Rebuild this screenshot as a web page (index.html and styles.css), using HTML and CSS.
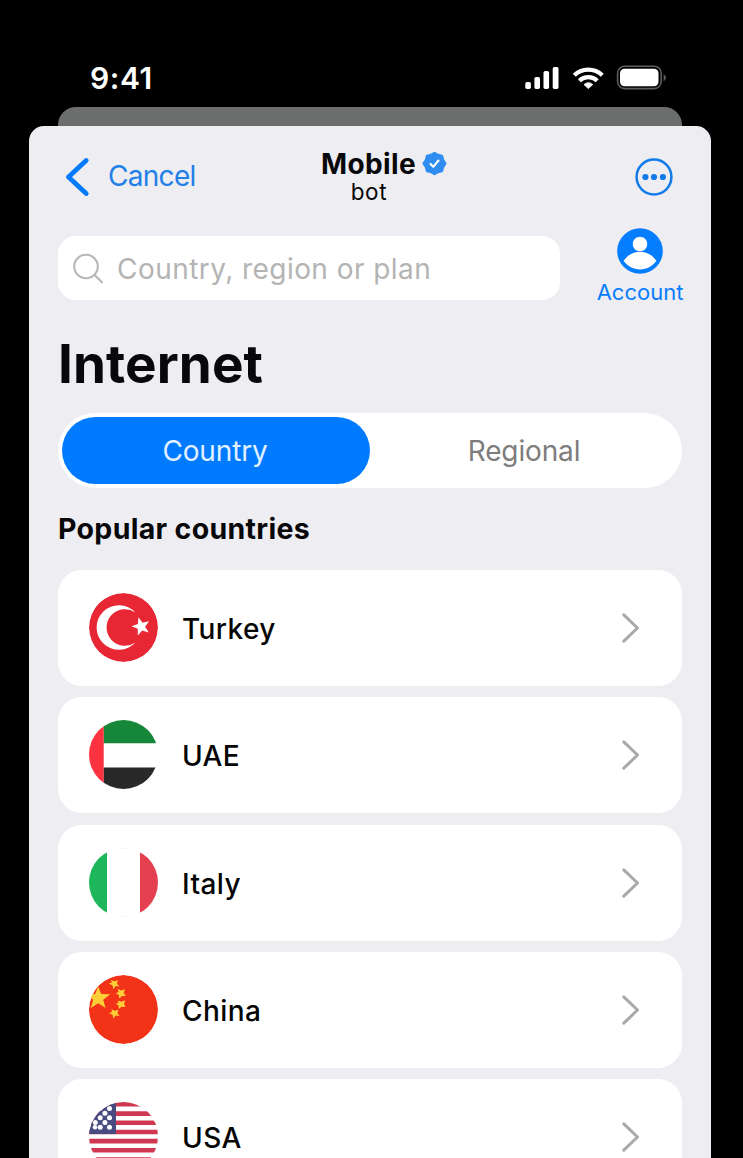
FILE: index.html
```html
<!DOCTYPE html>
<html lang="en">
<head>
<meta charset="utf-8">
<title>Mobile bot</title>
<link rel="stylesheet" href="styles.css">
</head>
<body>
<div class="phone">
  <header class="status">
    <span class="clock">9:41</span>
    <svg class="signals" width="142" height="26" viewBox="524 65 142 26">
      <g fill="#fff">
        <rect x="525.3" y="82" width="5.6" height="7" rx="1.7"/>
        <rect x="534.4" y="77" width="5.6" height="12" rx="1.7"/>
        <rect x="543.5" y="71" width="5.6" height="18" rx="1.7"/>
        <rect x="552.7" y="67" width="5.8" height="22" rx="1.7"/>
        <path d="M588.3 88.600 L584 84.600 Q588.300 80.700 592.800 84.600Z" stroke="#fff" stroke-width=".8" stroke-linejoin="round"/>
      </g>
      <g fill="none" stroke="#fff" stroke-width="4.300">
        <path d="M574.300 75.300 A20.300 20.300 0 0 1 602.300 75.300"/>
        <path d="M579.400 80.700 A13 13 0 0 1 597.200 80.700"/>
      </g>
      <rect x="617.600" y="66.200" width="43.600" height="22.400" rx="7" fill="none" stroke="#5c5c5c" stroke-width="1.600"/>
      <rect x="620" y="68.800" width="38.500" height="17.400" rx="4.500" fill="#fff"/>
      <path d="M663.600 74.300 V81.300 Q666 80 666 77.800 Q666 75.500 663.600 74.300Z" fill="#5c5c5c"/>
    </svg>
  </header>
  <div class="back-sheet"></div>
  <main class="sheet">
    <nav class="nav">
      <a class="cancel">
        <svg width="26" height="40" viewBox="0 0 26 40"><path d="M21.200 3.500 L3.500 20 L21.200 36.500" fill="none" stroke="#047bfb" stroke-width="4.800" stroke-linecap="round" stroke-linejoin="round"/></svg>
        <span>Cancel</span>
      </a>
      <div class="bot">
        <div class="bot-name"><span>Mobile</span>
          <svg width="25" height="25" viewBox="-12.500 -12.500 25 25">
            <path fill="#2f8df0" stroke="#2f8df0" stroke-width="2.400" stroke-linejoin="round" d="M0-10.600 L3.300-8.500 L7.500-7.500 L8.500-3.500 L10.800 0 L8.500 3.500 L7.500 7.500 L3.300 8.500 L0 10.600 L-3.300 8.500 L-7.500 7.500 L-8.500 3.500 L-10.800 0 L-8.500-3.500 L-7.500-7.500 L-3.300-8.500Z"/>
            <path d="M-4 .4 L-1.200 3.300 L4-3" fill="none" stroke="#fff" stroke-width="2.100" stroke-linecap="round" stroke-linejoin="round"/>
          </svg>
        </div>
        <div class="bot-kind">bot</div>
      </div>
      <svg class="more" width="38" height="38" viewBox="-19 -19 38 38">
        <circle r="17.400" fill="none" stroke="#117bea" stroke-width="2.500"/>
        <g fill="#117bea"><circle cx="-8.600" r="3.100"/><circle r="3.100"/><circle cx="8.900" r="3.100"/></g>
      </svg>
    </nav>
    <section class="find">
      <div class="search">
        <svg width="31" height="31" viewBox="0 0 31 31"><g fill="none" stroke="#b7b7b7" stroke-width="2.100" stroke-linecap="round"><circle cx="13" cy="13.500" r="11.800"/><path d="M21.500 22 L29 29.300"/></g></svg>
        <span>Country, region or plan</span>
      </div>
      <a class="account">
        <svg width="46" height="46" viewBox="-23 -23 46 46"><circle r="22.800" fill="#057dff"/><circle cy="-7" r="7.300" fill="#fff"/><path d="M-16.400 9.800 C-8-2.300 8-2.300 16.400 9.800 C8.500 21.300-8.500 21.300-16.400 9.800Z" fill="#fff"/></svg>
        <span>Account</span>
      </a>
    </section>
    <h1>Internet</h1>
    <div class="tabs">
      <div class="tab active">Country</div>
      <div class="tab">Regional</div>
    </div>
    <h2>Popular countries</h2>
    <ul class="list">
      <li>
        <svg class="flag" viewBox="-34.500 -34.500 69 69"><circle r="34.500" fill="#e82735"/><path d="M11.900-15 A22.300 22.300 0 1 0 11.900 15 A18.300 18.300 0 1 1 11.900-15Z" fill="#fff"/><path d="M0-10 L2.500-3.400 L9.500-3.100 L4 1.300 L5.900 8.100 L0 4.200 L-5.900 8.100 L-4 1.300 L-9.500-3.100 L-2.500-3.400Z" fill="#fff" transform="translate(17.600 -1) rotate(-16) scale(.96)"/></svg>
        <span>Turkey</span><svg class="chev" viewBox="0 0 18 30"><path d="M1.800 1.800 L15.500 15 L1.800 28.200"/></svg>
      </li>
      <li>
        <svg class="flag" viewBox="-34.500 -34.500 69 69"><path fill="#168638" d="M-20-34.500H34.500V-11H-20Z"/><path fill="#fff" d="M-20-11H34.500V13H-20Z"/><path fill="#292929" d="M-20 13H34.500V34.500H-20Z"/><path fill="#fb3340" d="M-34.500-34.500H-19.800V34.500H-34.500Z"/></svg>
        <span>UAE</span><svg class="chev" viewBox="0 0 18 30"><path d="M1.800 1.800 L15.500 15 L1.800 28.200"/></svg>
      </li>
      <li>
        <svg class="flag" viewBox="-34.500 -34.500 69 69"><path fill="#fff" d="M-34.500-34.500H34.500V34.500H-34.500Z"/><path fill="#1eb65b" d="M-34.500-34.500H-16.500V34.500H-34.500Z"/><path fill="#e4404f" d="M16.500-34.500H34.500V34.500H16.500Z"/><path d="M-7-33.900Q0-34.600 7-33.900M-7 33.900Q0 34.600 7 33.900" fill="none" stroke="#f3f3f3"/></svg>
        <span>Italy</span><svg class="chev" viewBox="0 0 18 30"><path d="M1.800 1.800 L15.500 15 L1.800 28.200"/></svg>
      </li>
      <li>
        <svg class="flag" viewBox="-34.500 -34.500 69 69"><circle r="34.500" fill="#f23317"/>
          <g fill="#fccf38"><path d="M0-11.500 L3-3.900 L12-3.600 L5 1.800 L7.400 10 L0 5.300 L-7.400 10 L-5 1.800 L-12-3.600 L-3-3.900Z" transform="translate(-25.300 -11.600)"/>
          <path d="M-12.500-29.500 L-9.200-28.200 L-5.300-29.200 L-6.600-26 L-4-23 L-7.800-23.400 L-10.200-20.300 L-11-24 L-14.600-26 L-11.700-26.800Z"/>
          <path d="M-5.800-20.800 L-2.500-19 L1.400-20.300 L.2-16.500 L2.400-13.500 L-1.500-13.500 L-4.300-11 L-4.700-14.500 L-7.800-16.300 L-5-17.600Z"/>
          <path d="M-5.800-9 L-2-7.700 L1.600-9.300 L.6-5.500 L2-2.400 L-2-2.800 L-4.800-.4 L-5-4 L-7.800-6 L-5-6.600Z"/>
          <path d="M-12-.3 L-8.800 1.300 L-5 .3 L-6.200 3.500 L-4 6.500 L-7.800 6 L-10.200 9 L-11 5.300 L-14.600 3.500 L-11.500 2.600Z"/></g></svg>
        <span>China</span><svg class="chev" viewBox="0 0 18 30"><path d="M1.800 1.800 L15.500 15 L1.800 28.200"/></svg>
      </li>
      <li>
        <svg class="flag" viewBox="-34.500 -34.500 69 69"><path fill="#fff" d="M-35-35H35V35H-35Z"/><path stroke="#cf3850" stroke-width="4.600" d="M-35-32.300H35M-35-22.900H35M-35-13.700H35M-35-4.500H35M-35 4.600H35M-35 13.800H35M-35 23H35M-35 32.300H35"/><path fill="#484b80" d="M-35-35H-7.500V-2.600H-35Z"/>
          <g fill="#fff"><circle cx="-14" cy="-28" r="2.500"/><circle cx="-23" cy="-27.800" r="2"/><circle cx="-18.600" cy="-23.300" r="2.500"/><circle cx="-14" cy="-18.700" r="2.500"/><circle cx="-23.300" cy="-18.700" r="2.500"/><circle cx="-18.600" cy="-14" r="2.500"/><circle cx="-28.200" cy="-14" r="2.500"/><circle cx="-14" cy="-9.300" r="2.500"/><circle cx="-23.300" cy="-9.300" r="2.500"/><circle cx="-28.500" cy="-9.300" r="2.300"/></g></svg>
        <span>USA</span><svg class="chev" viewBox="0 0 18 30"><path d="M1.800 1.800 L15.500 15 L1.800 28.200"/></svg>
      </li>
    </ul>
  </main>
</div>
</body>
</html>
```

FILE: styles.css
```css
* { box-sizing: border-box; }
body { margin: 0; background: #000; font-family: Inter, sans-serif; color: #08080a; }
.phone { height: 1158px; overflow: hidden; display: flex; flex-direction: column; }
.status { height: 107px; flex: none; padding: 65px 77px 0 90px; display: flex; justify-content: space-between; }
.clock { color: #fff; font-size: 30px; font-weight: 560; line-height: 27px; letter-spacing: .6px; }
.back-sheet { height: 19px; flex: none; margin: 0 61px 0 58px; background: #6c6e6d; border-radius: 18px 18px 0 0; }
.sheet { width: 682px; height: 1400px; flex: none; margin-left: 29px; padding: 0 29px; background: #eeedf2; border-radius: 15px 15px 0 0; }
.nav { height: 102px; padding: 0 9px 0 7px; display: grid; grid-template-columns: 200px 1fr 200px; align-items: center; }
.cancel { display: flex; align-items: center; gap: 17px; color: #217fe8; font-size: 28px; line-height: 34px; letter-spacing: -.7px; }
.cancel span { padding-bottom: 2px; }
.bot { text-align: center; }
.bot-name { display: flex; align-items: center; justify-content: center; gap: 6px; font-size: 28px; font-weight: 700; line-height: 28px; letter-spacing: .4px; margin-left: 30px; }
.bot-kind { font-size: 22.500px; line-height: 27px; letter-spacing: .7px; }
.more { justify-self: end; }
.find { height: 80px; display: flex; align-items: flex-start; }
.search { width: 502px; flex: none; height: 64px; margin-top: 8px; padding-left: 15px; background: #fff; border-radius: 18px; display: flex; align-items: center; gap: 13px; color: #b4b4b4; font-size: 28px; letter-spacing: .45px; }
.search span { padding-top: 2px; }
.account { width: 100px; flex: none; margin-left: 30px; display: flex; flex-direction: column; align-items: center; color: #087dfd; font-size: 22px; line-height: 37px; }
h1 { margin: 24px 0 0; font-size: 53px; line-height: 64px; font-weight: 700; letter-spacing: .1px; }
.tabs { height: 75px; margin-top: 17px; padding: 4px; border-radius: 38px; background: #fff; display: grid; grid-template-columns: 1fr 1fr; }
.tab { border-radius: 34px; display: flex; align-items: center; justify-content: center; font-size: 28px; color: #7d7d7d; letter-spacing: -.15px; }
.active { background: #007aff; color: #e1f1ff; padding-right: 2px; }
h2 { margin: 23px 0 0; font-size: 28.500px; line-height: 36px; font-weight: 700; letter-spacing: .32px; }
.list { list-style: none; margin: 23px 0 0; padding: 0; display: grid; gap: 11.300px; }
.list li { height: 116px; padding: 0 42px 0 31px; border-radius: 24px; background: #fff; display: flex; align-items: center; color: #050505; font-size: 28px; font-weight: 480; letter-spacing: .4px; }
.list span { flex: 1; margin-left: 24px; padding-top: 2px; }
.flag { width: 69px; height: 69px; border-radius: 50%; margin-bottom: 1px; }
.chev { width: 18px; height: 30px; fill: none; stroke: #a9a9a9; stroke-width: 3; stroke-linecap: round; stroke-linejoin: round; }
```
